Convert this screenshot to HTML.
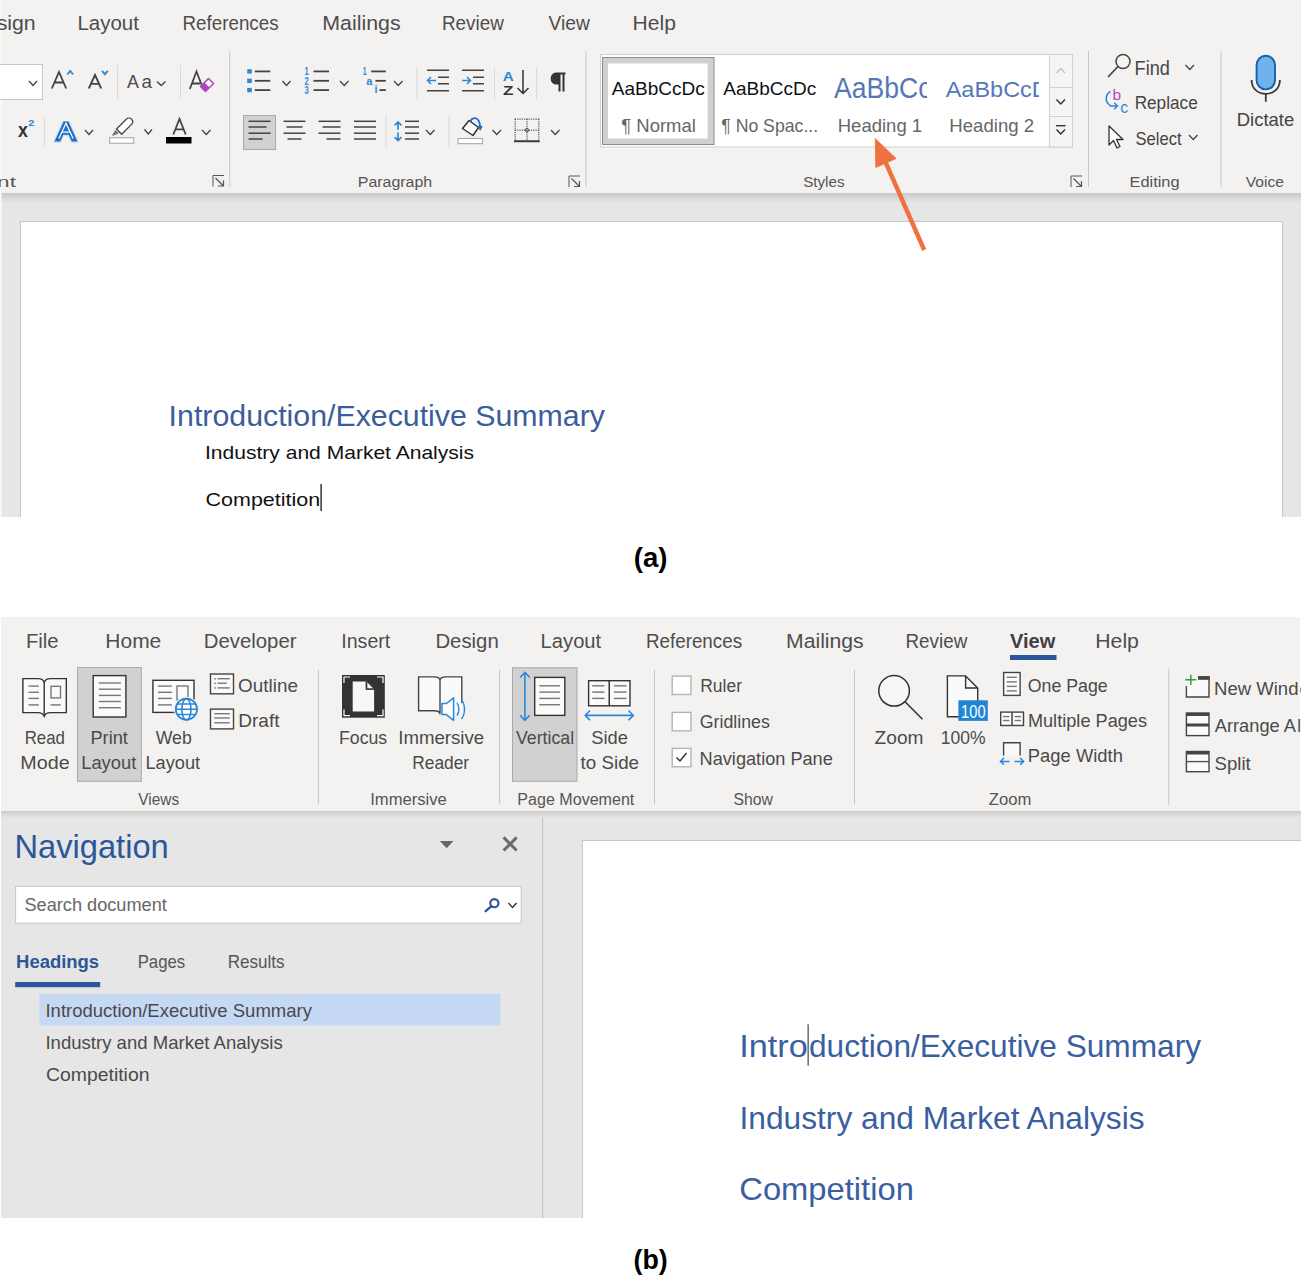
<!DOCTYPE html>
<html><head><meta charset="utf-8"><title>Word ribbon</title>
<style>html,body{margin:0;padding:0;background:#fff;overflow:hidden;} svg{display:block;} text{font-family:"Liberation Sans",sans-serif;}</style>
</head><body>
<svg width="1301" height="1279" viewBox="0 0 1301 1279" shape-rendering="geometricPrecision">
<rect width="1301" height="1279" fill="#fff"/>
<rect x="0" y="0" width="1301" height="193" fill="#f3f2f1"/>
<rect x="0" y="193" width="1301" height="324" fill="#e6e6e6"/>
<defs><linearGradient id="shA" x1="0" y1="0" x2="0" y2="1"><stop offset="0" stop-color="#c9c9c9"/><stop offset="1" stop-color="#e6e6e6"/></linearGradient></defs>
<rect x="0" y="193" width="1301" height="10" fill="url(#shA)"/>
<rect x="0" y="0" width="1.5" height="517" fill="#fafafa"/>
<rect x="20.5" y="221.5" width="1262" height="300" fill="#fff" stroke="#c6c6c6" stroke-width="1"/>
<text x="-3.33" y="30.00" font-size="19.83" font-family="Liberation Sans" font-weight="normal" fill="#4d4d4d" textLength="39.03" lengthAdjust="spacingAndGlyphs" >sign</text>
<text x="77.40" y="30.00" font-size="19.83" font-family="Liberation Sans" font-weight="normal" fill="#4d4d4d" textLength="61.53" lengthAdjust="spacingAndGlyphs" >Layout</text>
<text x="182.53" y="30.00" font-size="19.83" font-family="Liberation Sans" font-weight="normal" fill="#4d4d4d" textLength="96.05" lengthAdjust="spacingAndGlyphs" >References</text>
<text x="322.33" y="30.00" font-size="19.83" font-family="Liberation Sans" font-weight="normal" fill="#4d4d4d" textLength="78.34" lengthAdjust="spacingAndGlyphs" >Mailings</text>
<text x="442.03" y="30.00" font-size="19.83" font-family="Liberation Sans" font-weight="normal" fill="#4d4d4d" textLength="61.74" lengthAdjust="spacingAndGlyphs" >Review</text>
<text x="548.50" y="30.00" font-size="19.83" font-family="Liberation Sans" font-weight="normal" fill="#4d4d4d" textLength="41.27" lengthAdjust="spacingAndGlyphs" >View</text>
<text x="632.56" y="30.00" font-size="19.83" font-family="Liberation Sans" font-weight="normal" fill="#4d4d4d" textLength="43.30" lengthAdjust="spacingAndGlyphs" >Help</text>
<rect x="-1" y="64.5" width="43.5" height="35" fill="#fff" stroke="#c8c6c4" stroke-width="1"/>
<path d="M29,81 L33.0,85.5 L37,81" fill="none" stroke="#444" stroke-width="1.3"/>
<path d="M51.8,88.5 L59,72 L66.2,88.5 M54.5,82.5 L63.5,82.5" fill="none" stroke="#444" stroke-width="1.8"/>
<path d="M67.3,74.5 L70.2,71 L73.1,74.5" fill="none" stroke="#2b88d8" stroke-width="1.9"/>
<path d="M88.8,88.5 L95,75 L101.2,88.5 M91,83.8 L99,83.8" fill="none" stroke="#444" stroke-width="1.8"/>
<path d="M102,70.8 L104.9,74.2 L107.8,70.8" fill="none" stroke="#2b88d8" stroke-width="1.9"/>
<rect x="117.0" y="65" width="1" height="34" fill="#dcdad8"/>
<text x="127.00" y="88.00" font-size="18.16" font-family="Liberation Sans" font-weight="normal" fill="#4a4a4a" textLength="11.91" lengthAdjust="spacingAndGlyphs" >A</text>
<text x="141.41" y="88.00" font-size="17.92" font-family="Liberation Sans" font-weight="normal" fill="#4a4a4a" textLength="10.47" lengthAdjust="spacingAndGlyphs" >a</text>
<path d="M157,81.5 L161.25,85.5 L165.5,81.5" fill="none" stroke="#444" stroke-width="1.3"/>
<rect x="180.0" y="65" width="1" height="34" fill="#dcdad8"/>
<path d="M189.8,89 L196.5,71.5 L203.2,89 M192,83.5 L200,83.5" fill="none" stroke="#444" stroke-width="1.8"/>
<path d="M200.5,86.5 L208.5,78.5 L213.5,83.5 L205.5,91.5 Z" fill="#fff" stroke="#b146c2" stroke-width="1.6" stroke-linejoin="round"/><path d="M200.5,86.5 L204.5,82.5 L209.5,87.5 L205.5,91.5 Z" fill="#b146c2"/>
<text x="18.00" y="137.00" font-size="20.23" font-family="Liberation Sans" font-weight="bold" fill="#333" textLength="9.89" lengthAdjust="spacingAndGlyphs" >x</text>
<text x="28.16" y="126.00" font-size="9.78" font-family="Liberation Sans" font-weight="bold" fill="#2b88d8" textLength="6.12" lengthAdjust="spacingAndGlyphs" >2</text>
<rect x="44.2" y="117" width="1" height="30" fill="#dcdad8"/>
<clipPath id="teA"><rect x="40" y="110" width="50" height="33"/></clipPath>
<path d="M56.5,143.4 L66,122.6 L75.5,143.4 M61.3,132.2 L70.7,132.2" fill="none" stroke="#b9dcf8" stroke-width="7.6" stroke-linejoin="bevel" opacity="0.75" clip-path="url(#teA)"/>
<clipPath id="teB"><rect x="40" y="110" width="50" height="31.4"/></clipPath>
<path d="M56.5,143.4 L66,122.6 L75.5,143.4 M61.3,132.2 L70.7,132.2" fill="none" stroke="#1f6fc0" stroke-width="5.2" stroke-linejoin="bevel" clip-path="url(#teB)"/>
<path d="M58.9,138.6 L66,123.2 L73.1,138.6 M61.8,132.2 L70.2,132.2" fill="none" stroke="#fff" stroke-width="1.2" stroke-linejoin="miter"/>
<path d="M85,130 L89.0,134.5 L93,130" fill="none" stroke="#444" stroke-width="1.3"/>
<rect x="109.6" y="137.7" width="24.2" height="5.6" fill="#fff" stroke="#aaa" stroke-width="1.1"/>
<path d="M111.8,135.6 L115.5,130 L118.8,133.3 L114,135.6 Z" fill="#777"/>
<path d="M116.5,129 L126.3,119.2 C127.8,117.7 130,117.7 131.5,119.2 C133,120.7 133,122.9 131.5,124.4 L121.7,134.2 Z" fill="#fff" stroke="#444" stroke-width="1.3" stroke-linejoin="round"/>
<path d="M144.5,129.5 L148.25,134 L152,129.5" fill="none" stroke="#444" stroke-width="1.3"/>
<path d="M173.3,134.5 L179.5,119 L185.7,134.5 M175.5,129.3 L183.5,129.3" fill="none" stroke="#444" stroke-width="1.8"/>
<rect x="166" y="137" width="25.5" height="6.5" fill="#000"/>
<path d="M202,130 L206.25,134.5 L210.5,130" fill="none" stroke="#444" stroke-width="1.3"/>
<text x="-2.91" y="186.50" font-size="14.66" font-family="Liberation Sans" font-weight="normal" fill="#555" textLength="18.83" lengthAdjust="spacingAndGlyphs" >nt</text>
<path d="M213.0,186.5 L213.0,175.5 L224.0,175.5" fill="none" stroke="#555" stroke-width="1"/><path d="M215.5,178 L223.5,186 M218.0,186 L223.5,186 L223.5,180.5" fill="none" stroke="#555" stroke-width="1.2"/>
<rect x="229.2" y="51" width="1" height="136" fill="#c8c6c4"/>
<rect x="247.2" y="69.2" width="4.6" height="4.4" fill="#2b88d8"/><rect x="254.8" y="70.5" width="15.5" height="1.8" fill="#444"/><rect x="247.2" y="78.6" width="4.6" height="4.4" fill="#2b88d8"/><rect x="254.8" y="79.89999999999999" width="15.5" height="1.8" fill="#444"/><rect x="247.2" y="87.89999999999999" width="4.6" height="4.4" fill="#2b88d8"/><rect x="254.8" y="89.19999999999999" width="15.5" height="1.8" fill="#444"/>
<path d="M282.5,81 L286.5,85.5 L290.5,81" fill="none" stroke="#444" stroke-width="1.3"/>
<text x="304.6" y="75.30000000000001" font-family="Liberation Sans" font-weight="bold" font-size="10.5" fill="#2b88d8" textLength="4.2" lengthAdjust="spacingAndGlyphs">1</text><rect x="313.5" y="70.5" width="15.5" height="1.8" fill="#444"/><text x="304.6" y="84.7" font-family="Liberation Sans" font-weight="bold" font-size="10.5" fill="#2b88d8" textLength="4.2" lengthAdjust="spacingAndGlyphs">2</text><rect x="313.5" y="79.89999999999999" width="15.5" height="1.8" fill="#444"/><text x="304.6" y="94.0" font-family="Liberation Sans" font-weight="bold" font-size="10.5" fill="#2b88d8" textLength="4.2" lengthAdjust="spacingAndGlyphs">3</text><rect x="313.5" y="89.19999999999999" width="15.5" height="1.8" fill="#444"/>
<path d="M340,81 L344.25,85.5 L348.5,81" fill="none" stroke="#444" stroke-width="1.3"/>
<text x="362.8" y="75.3" font-family="Liberation Sans" font-weight="bold" font-size="10" fill="#2b88d8" textLength="3.8" lengthAdjust="spacingAndGlyphs">1</text><text x="366.3" y="85" font-family="Liberation Sans" font-weight="bold" font-size="11" fill="#2b88d8" textLength="6.2" lengthAdjust="spacingAndGlyphs">a</text><text x="374.4" y="93.3" font-family="Liberation Sans" font-weight="bold" font-size="10" fill="#2b88d8" textLength="3" lengthAdjust="spacingAndGlyphs">i</text><rect x="371.2" y="70.5" width="14.6" height="1.8" fill="#444"/><rect x="375.4" y="79.9" width="10.4" height="1.8" fill="#444"/><rect x="379.5" y="89.2" width="6.3" height="1.8" fill="#444"/>
<path d="M394,81 L398.25,85.5 L402.5,81" fill="none" stroke="#444" stroke-width="1.3"/>
<rect x="416.4" y="67" width="1" height="33" fill="#dcdad8"/>
<rect x="427" y="69.5" width="22" height="1.5" fill="#444"/><rect x="427" y="90" width="22" height="1.5" fill="#444"/><rect x="438" y="76.5" width="11" height="1.5" fill="#444"/><rect x="438" y="83" width="11" height="1.5" fill="#444"/><path d="M436,80.5 L427.5,80.5 M431,77 L427.5,80.5 L431,84" fill="none" stroke="#2b88d8" stroke-width="1.5"/>
<rect x="462" y="69.5" width="22" height="1.5" fill="#444"/><rect x="462" y="90" width="22" height="1.5" fill="#444"/><rect x="473" y="76.5" width="11" height="1.5" fill="#444"/><rect x="473" y="83" width="11" height="1.5" fill="#444"/><path d="M462,80.5 L470.5,80.5 M467,77 L470.5,80.5 L467,84" fill="none" stroke="#2b88d8" stroke-width="1.5"/>
<rect x="494.0" y="67" width="1" height="33" fill="#dcdad8"/>
<text x="502.8" y="80.5" font-family="Liberation Sans" font-weight="bold" font-size="13.5" fill="#2b88d8" textLength="11" lengthAdjust="spacingAndGlyphs">A</text>
<text x="503" y="94.5" font-family="Liberation Sans" font-weight="bold" font-size="13" fill="#333" textLength="10.5" lengthAdjust="spacingAndGlyphs">Z</text>
<path d="M523,70 L523,93.5 M517.5,88 L523,93.5 L528.5,88" fill="none" stroke="#333" stroke-width="1.5"/>
<rect x="536.1" y="67" width="1" height="33" fill="#dcdad8"/>
<path d="M559.5,73 L559.5,91.5 M563.5,73 L563.5,91.5 M565.5,73.5 L556,73.5 C550.5,73.5 550,83.5 556,83.5 L559.5,83.5" fill="none" stroke="#333" stroke-width="2"/>
<path d="M556,73.5 C551,73.5 551,83.5 556,83.5 L559.5,83.5 L559.5,73.5 Z" fill="#333"/>
<rect x="243.5" y="115.5" width="32" height="34" fill="#d1d1d1" stroke="#a9a9a9" stroke-width="1"/>
<rect x="248.5" y="120.55" width="22" height="1.5" fill="#444"/><rect x="248.5" y="126.25" width="18" height="1.5" fill="#444"/><rect x="248.5" y="132.45" width="22" height="1.5" fill="#444"/><rect x="248.5" y="138.25" width="14" height="1.5" fill="#444"/>
<rect x="283.5" y="120.55" width="22" height="1.5" fill="#444"/><rect x="286.5" y="126.25" width="16" height="1.5" fill="#444"/><rect x="283.5" y="132.45" width="22" height="1.5" fill="#444"/><rect x="287.5" y="138.25" width="14" height="1.5" fill="#444"/>
<rect x="318.5" y="120.55" width="22" height="1.5" fill="#444"/><rect x="322.5" y="126.25" width="18" height="1.5" fill="#444"/><rect x="318.5" y="132.45" width="22" height="1.5" fill="#444"/><rect x="326.5" y="138.25" width="14" height="1.5" fill="#444"/>
<rect x="354" y="120.55" width="22" height="1.5" fill="#444"/><rect x="354" y="126.25" width="22" height="1.5" fill="#444"/><rect x="354" y="132.45" width="22" height="1.5" fill="#444"/><rect x="354" y="138.25" width="22" height="1.5" fill="#444"/>
<rect x="385.4" y="115" width="1" height="33" fill="#dcdad8"/>
<path d="M398,122 L398,129.8 M398,132.5 L398,140.5 M394.6,125.3 L398,121.9 L401.4,125.3 M394.6,137.2 L398,140.6 L401.4,137.2" fill="none" stroke="#2b88d8" stroke-width="1.7"/>
<rect x="405" y="120.55" width="14" height="1.5" fill="#444"/><rect x="405" y="126.25" width="14" height="1.5" fill="#444"/><rect x="405" y="132.45" width="14" height="1.5" fill="#444"/><rect x="405" y="138.25" width="14" height="1.5" fill="#444"/>
<path d="M426,130 L430.25,134.5 L434.5,130" fill="none" stroke="#444" stroke-width="1.3"/>
<rect x="448.5" y="115" width="1" height="33" fill="#dcdad8"/>
<rect x="458" y="138.5" width="24.5" height="5.2" fill="#fff" stroke="#aaa" stroke-width="1.1"/>
<path d="M462.5,128.5 L469,120.5 L478.5,127.5 L473,135.5 Z" fill="#fafafa" stroke="#333" stroke-width="1.5" stroke-linejoin="round"/>
<path d="M470.5,121.8 C471,118 475.5,117 477.8,119.5 C479.5,121.3 480,124 480,127" fill="none" stroke="#1d6fc9" stroke-width="1.8"/><path d="M477.2,126 L480.2,131 L482.8,126 Z" fill="#1d6fc9"/>
<path d="M492.5,130 L496.75,134.5 L501,130" fill="none" stroke="#444" stroke-width="1.3"/>
<g fill="#555"><rect x="514.80" y="118.5" width="1.2" height="1.2"/><rect x="514.80" y="129.6" width="1.2" height="1.2"/><rect x="514.6" y="118.80" width="1.2" height="1.2"/><rect x="526.4" y="118.80" width="1.2" height="1.2"/><rect x="538.2" y="118.80" width="1.2" height="1.2"/><rect x="517.10" y="118.5" width="1.2" height="1.2"/><rect x="517.10" y="129.6" width="1.2" height="1.2"/><rect x="514.6" y="121.00" width="1.2" height="1.2"/><rect x="526.4" y="121.00" width="1.2" height="1.2"/><rect x="538.2" y="121.00" width="1.2" height="1.2"/><rect x="519.40" y="118.5" width="1.2" height="1.2"/><rect x="519.40" y="129.6" width="1.2" height="1.2"/><rect x="514.6" y="123.20" width="1.2" height="1.2"/><rect x="526.4" y="123.20" width="1.2" height="1.2"/><rect x="538.2" y="123.20" width="1.2" height="1.2"/><rect x="521.70" y="118.5" width="1.2" height="1.2"/><rect x="521.70" y="129.6" width="1.2" height="1.2"/><rect x="514.6" y="125.40" width="1.2" height="1.2"/><rect x="526.4" y="125.40" width="1.2" height="1.2"/><rect x="538.2" y="125.40" width="1.2" height="1.2"/><rect x="524.00" y="118.5" width="1.2" height="1.2"/><rect x="524.00" y="129.6" width="1.2" height="1.2"/><rect x="514.6" y="127.60" width="1.2" height="1.2"/><rect x="526.4" y="127.60" width="1.2" height="1.2"/><rect x="538.2" y="127.60" width="1.2" height="1.2"/><rect x="526.30" y="118.5" width="1.2" height="1.2"/><rect x="526.30" y="129.6" width="1.2" height="1.2"/><rect x="514.6" y="129.80" width="1.2" height="1.2"/><rect x="526.4" y="129.80" width="1.2" height="1.2"/><rect x="538.2" y="129.80" width="1.2" height="1.2"/><rect x="528.60" y="118.5" width="1.2" height="1.2"/><rect x="528.60" y="129.6" width="1.2" height="1.2"/><rect x="514.6" y="132.00" width="1.2" height="1.2"/><rect x="526.4" y="132.00" width="1.2" height="1.2"/><rect x="538.2" y="132.00" width="1.2" height="1.2"/><rect x="530.90" y="118.5" width="1.2" height="1.2"/><rect x="530.90" y="129.6" width="1.2" height="1.2"/><rect x="514.6" y="134.20" width="1.2" height="1.2"/><rect x="526.4" y="134.20" width="1.2" height="1.2"/><rect x="538.2" y="134.20" width="1.2" height="1.2"/><rect x="533.20" y="118.5" width="1.2" height="1.2"/><rect x="533.20" y="129.6" width="1.2" height="1.2"/><rect x="514.6" y="136.40" width="1.2" height="1.2"/><rect x="526.4" y="136.40" width="1.2" height="1.2"/><rect x="538.2" y="136.40" width="1.2" height="1.2"/><rect x="535.50" y="118.5" width="1.2" height="1.2"/><rect x="535.50" y="129.6" width="1.2" height="1.2"/><rect x="514.6" y="138.60" width="1.2" height="1.2"/><rect x="526.4" y="138.60" width="1.2" height="1.2"/><rect x="538.2" y="138.60" width="1.2" height="1.2"/><rect x="537.80" y="118.5" width="1.2" height="1.2"/><rect x="537.80" y="129.6" width="1.2" height="1.2"/><rect x="514.6" y="140.80" width="1.2" height="1.2"/><rect x="526.4" y="140.80" width="1.2" height="1.2"/><rect x="538.2" y="140.80" width="1.2" height="1.2"/></g><circle cx="527" cy="130.2" r="1.8" fill="none" stroke="#555" stroke-width="1"/><rect x="514" y="140.3" width="25.6" height="1.9" fill="#333"/>
<path d="M551,130 L555.25,134.5 L559.5,130" fill="none" stroke="#444" stroke-width="1.3"/>
<text x="357.75" y="186.70" font-size="15.36" font-family="Liberation Sans" font-weight="normal" fill="#555" textLength="74.44" lengthAdjust="spacingAndGlyphs" >Paragraph</text>
<path d="M569.0,187.0 L569.0,176.0 L580.0,176.0" fill="none" stroke="#555" stroke-width="1"/><path d="M571.5,178.5 L579.5,186.5 M574.0,186.5 L579.5,186.5 L579.5,181.0" fill="none" stroke="#555" stroke-width="1.2"/>
<rect x="585.5" y="51" width="1" height="136" fill="#c8c6c4"/>
<rect x="600.5" y="54.5" width="472" height="92.5" fill="#fff" stroke="#d2d0ce" stroke-width="1"/>
<rect x="602.5" y="57.5" width="111.5" height="87" fill="#d0d0d0" stroke="#8c8c8c" stroke-width="1"/>
<rect x="608" y="63.5" width="99.6" height="75" fill="#fff"/>
<text x="611.70" y="94.80" font-size="18.72" font-family="Liberation Sans" font-weight="normal" fill="#111" textLength="93.10" lengthAdjust="spacingAndGlyphs" >AaBbCcDc</text>
<text x="621.22" y="132.10" font-size="18.02" font-family="Liberation Sans" font-weight="normal" fill="#666" textLength="74.70" lengthAdjust="spacingAndGlyphs" >¶ Normal</text>
<text x="723.30" y="94.80" font-size="18.72" font-family="Liberation Sans" font-weight="normal" fill="#111" textLength="93.00" lengthAdjust="spacingAndGlyphs" >AaBbCcDc</text>
<text x="721.25" y="132.10" font-size="18.02" font-family="Liberation Sans" font-weight="normal" fill="#666" textLength="96.85" lengthAdjust="spacingAndGlyphs" >¶ No Spac...</text>
<clipPath id="c1"><rect x="826" y="60" width="101" height="40"/></clipPath>
<text x="834.10" y="98.10" font-size="28.91" font-family="Liberation Sans" font-weight="normal" fill="#5577b6" textLength="97.31" lengthAdjust="spacingAndGlyphs" clip-path="url(#c1)">AaBbCc</text>
<clipPath id="c2"><rect x="940" y="60" width="99" height="40"/></clipPath>
<text x="945.70" y="97.10" font-size="21.79" font-family="Liberation Sans" font-weight="normal" fill="#5577b6" textLength="103.11" lengthAdjust="spacingAndGlyphs" clip-path="url(#c2)">AaBbCcD</text>
<text x="837.75" y="132.20" font-size="18.02" font-family="Liberation Sans" font-weight="normal" fill="#666" textLength="84.40" lengthAdjust="spacingAndGlyphs" >Heading 1</text>
<text x="949.35" y="132.20" font-size="18.02" font-family="Liberation Sans" font-weight="normal" fill="#666" textLength="84.81" lengthAdjust="spacingAndGlyphs" >Heading 2</text>
<rect x="1049.5" y="54.5" width="23" height="92.5" fill="#f5f5f5" stroke="#d2d0ce" stroke-width="1"/>
<rect x="1049.5" y="87.5" width="23" height="29" fill="#f5f5f5" stroke="#d2d0ce" stroke-width="1"/>
<path d="M1056.5,73 L1060.75,68.5 L1065,73" fill="none" stroke="#c0c0c0" stroke-width="1.3"/>
<path d="M1056.5,99.5 L1060.75,104 L1065,99.5" fill="none" stroke="#333" stroke-width="1.5"/>
<rect x="1056" y="125" width="9.5" height="1.4" fill="#333"/><path d="M1056.5,129.5 L1060.75,134 L1065,129.5" fill="none" stroke="#333" stroke-width="1.5"/>
<text x="803.13" y="186.70" font-size="15.36" font-family="Liberation Sans" font-weight="normal" fill="#555" textLength="41.35" lengthAdjust="spacingAndGlyphs" >Styles</text>
<path d="M1071.0,187.0 L1071.0,176.0 L1082.0,176.0" fill="none" stroke="#555" stroke-width="1"/><path d="M1073.5,178.5 L1081.5,186.5 M1076.0,186.5 L1081.5,186.5 L1081.5,181.0" fill="none" stroke="#555" stroke-width="1.2"/>
<rect x="1088.0" y="51" width="1" height="136" fill="#c8c6c4"/>
<circle cx="1123" cy="61.5" r="7" fill="none" stroke="#444" stroke-width="1.5"/><path d="M1118,66.5 L1108,77" stroke="#444" stroke-width="1.8"/>
<text x="1134.59" y="74.60" font-size="19.55" font-family="Liberation Sans" font-weight="normal" fill="#444" textLength="35.23" lengthAdjust="spacingAndGlyphs" >Find</text>
<path d="M1185.5,65 L1189.75,69.5 L1194,65" fill="none" stroke="#444" stroke-width="1.3"/>
<text x="1112.53" y="100.00" font-size="13.97" font-family="Liberation Sans" font-weight="normal" fill="#b146c2" textLength="8.59" lengthAdjust="spacingAndGlyphs" >b</text>
<text x="1120.21" y="112.80" font-size="16.98" font-family="Liberation Sans" font-weight="normal" fill="#2b88d8" textLength="7.83" lengthAdjust="spacingAndGlyphs" >c</text>
<path d="M1110.5,91.5 C1105.5,94 1105,101 1108.5,104 L1110.5,106 L1117.5,106 M1114.2,102.7 L1117.5,106 L1114.2,109.3" fill="none" stroke="#2b88d8" stroke-width="1.5"/>
<text x="1134.66" y="109.40" font-size="18.02" font-family="Liberation Sans" font-weight="normal" fill="#444" textLength="63.04" lengthAdjust="spacingAndGlyphs" >Replace</text>
<path d="M1109,126 L1109,145 L1113.5,140.5 L1117,148 L1120,146.5 L1116.5,139.5 L1123,139.5 Z" fill="#fff" stroke="#333" stroke-width="1.3" stroke-linejoin="round"/>
<text x="1135.48" y="144.70" font-size="18.16" font-family="Liberation Sans" font-weight="normal" fill="#444" textLength="46.06" lengthAdjust="spacingAndGlyphs" >Select</text>
<path d="M1189,135 L1193.25,139.5 L1197.5,135" fill="none" stroke="#444" stroke-width="1.3"/>
<text x="1129.52" y="186.70" font-size="15.36" font-family="Liberation Sans" font-weight="normal" fill="#555" textLength="50.00" lengthAdjust="spacingAndGlyphs" >Editing</text>
<rect x="1220.5" y="51" width="1" height="136" fill="#c8c6c4"/>
<rect x="1256.6" y="55.8" width="18.4" height="33.6" rx="9.2" fill="#6fb3ea" stroke="#1a5fae" stroke-width="1.9"/>
<path d="M1251.6,80 C1251.6,98.5 1279.9,98.5 1279.9,80" fill="none" stroke="#3a3a3a" stroke-width="1.8"/><path d="M1265.8,93 L1265.8,101.8" stroke="#3a3a3a" stroke-width="1.8"/>
<text x="1236.76" y="126.00" font-size="18.16" font-family="Liberation Sans" font-weight="normal" fill="#444" textLength="57.49" lengthAdjust="spacingAndGlyphs" >Dictate</text>
<text x="1245.70" y="186.70" font-size="15.36" font-family="Liberation Sans" font-weight="normal" fill="#555" textLength="38.23" lengthAdjust="spacingAndGlyphs" >Voice</text>
<text x="168.63" y="425.80" font-size="29.05" font-family="Liberation Sans" font-weight="normal" fill="#3a5d9c" textLength="436.37" lengthAdjust="spacingAndGlyphs" >Introduction/Executive Summary</text>
<text x="204.96" y="459.00" font-size="18.16" font-family="Liberation Sans" font-weight="normal" fill="#111" textLength="269.09" lengthAdjust="spacingAndGlyphs" >Industry and Market Analysis</text>
<text x="205.59" y="505.60" font-size="18.16" font-family="Liberation Sans" font-weight="normal" fill="#111" textLength="114.61" lengthAdjust="spacingAndGlyphs" >Competition</text>
<rect x="320.5" y="484" width="1.2" height="27" fill="#000"/>
<rect x="0" y="517" width="1301" height="100" fill="#fff"/>
<text x="633.81" y="567.00" font-size="27.00" font-family="Liberation Sans" font-weight="bold" fill="#000" textLength="33.69" lengthAdjust="spacingAndGlyphs" >(a)</text>
<path d="M924.2,250 L884.6,160" stroke="#ef7140" stroke-width="4.4" stroke-linecap="butt"/>
<path d="M875.2,138.6 L875.8,167.6 L896.1,158.5 Z" fill="#ef7140" stroke="#ef7140" stroke-width="0.8" stroke-linejoin="miter"/>
<rect x="1" y="617" width="1299" height="194" fill="#f3f2f1"/>
<rect x="1" y="811" width="1300" height="407" fill="#e6e6e6"/>
<defs><linearGradient id="shB" x1="0" y1="0" x2="0" y2="1"><stop offset="0" stop-color="#cdcdcd"/><stop offset="1" stop-color="#e6e6e6"/></linearGradient></defs>
<rect x="1" y="811" width="1300" height="7" fill="url(#shB)"/>
<rect x="542" y="817" width="1.2" height="401" fill="#c8c8c8"/>
<rect x="582.5" y="840.5" width="719" height="378" fill="#fff" stroke="#c6c6c6" stroke-width="1"/>
<rect x="0" y="1218" width="1301" height="61" fill="#fff"/>
<text x="25.91" y="647.60" font-size="19.83" font-family="Liberation Sans" font-weight="normal" fill="#4d4d4d" textLength="32.71" lengthAdjust="spacingAndGlyphs" >File</text>
<text x="105.36" y="647.60" font-size="19.83" font-family="Liberation Sans" font-weight="normal" fill="#4d4d4d" textLength="55.89" lengthAdjust="spacingAndGlyphs" >Home</text>
<text x="203.81" y="647.60" font-size="19.83" font-family="Liberation Sans" font-weight="normal" fill="#4d4d4d" textLength="92.69" lengthAdjust="spacingAndGlyphs" >Developer</text>
<text x="341.27" y="647.60" font-size="19.83" font-family="Liberation Sans" font-weight="normal" fill="#4d4d4d" textLength="48.96" lengthAdjust="spacingAndGlyphs" >Insert</text>
<text x="435.41" y="647.60" font-size="19.83" font-family="Liberation Sans" font-weight="normal" fill="#4d4d4d" textLength="63.33" lengthAdjust="spacingAndGlyphs" >Design</text>
<text x="540.62" y="647.60" font-size="19.83" font-family="Liberation Sans" font-weight="normal" fill="#4d4d4d" textLength="60.61" lengthAdjust="spacingAndGlyphs" >Layout</text>
<text x="645.93" y="647.60" font-size="19.83" font-family="Liberation Sans" font-weight="normal" fill="#4d4d4d" textLength="96.16" lengthAdjust="spacingAndGlyphs" >References</text>
<text x="786.05" y="647.60" font-size="19.83" font-family="Liberation Sans" font-weight="normal" fill="#4d4d4d" textLength="77.61" lengthAdjust="spacingAndGlyphs" >Mailings</text>
<text x="905.53" y="647.60" font-size="19.83" font-family="Liberation Sans" font-weight="normal" fill="#4d4d4d" textLength="61.74" lengthAdjust="spacingAndGlyphs" >Review</text>
<text x="1010.00" y="647.50" font-size="19.83" font-family="Liberation Sans" font-weight="bold" fill="#404040" textLength="45.23" lengthAdjust="spacingAndGlyphs" >View</text>
<rect x="1010" y="655" width="46.5" height="5" fill="#2b579a"/>
<text x="1095.35" y="647.60" font-size="19.83" font-family="Liberation Sans" font-weight="normal" fill="#4d4d4d" textLength="43.51" lengthAdjust="spacingAndGlyphs" >Help</text>
<path d="M22.9,678.6 L38,678.6 C41,678.6 43.5,680 44.2,682.5 C45,680 47.5,678.6 50.5,678.6 L66.3,678.6 L66.3,712.6 L50.5,712.6 C47.5,712.6 45.2,714 44.2,716.3 C43.2,714 41,712.6 38,712.6 L22.9,712.6 Z M44.2,682.5 L44.2,714.5" fill="#fafafa" stroke="#333" stroke-width="1.4"/>
<rect x="28.5" y="685.4" width="10.3" height="1.4" fill="#777"/><rect x="28.5" y="691.5999999999999" width="10.3" height="1.4" fill="#777"/><rect x="28.5" y="697.6999999999999" width="10.3" height="1.4" fill="#777"/><rect x="28.5" y="704.1999999999999" width="10.3" height="1.4" fill="#777"/><rect x="51" y="686.3" width="9.5" height="11.6" fill="none" stroke="#777" stroke-width="1.4"/><rect x="50.4" y="704.2" width="10.4" height="1.4" fill="#777"/>
<text x="24.69" y="743.80" font-size="18.44" font-family="Liberation Sans" font-weight="normal" fill="#4a4a4a" textLength="40.16" lengthAdjust="spacingAndGlyphs" >Read</text>
<text x="20.36" y="768.50" font-size="18.44" font-family="Liberation Sans" font-weight="normal" fill="#4a4a4a" textLength="49.24" lengthAdjust="spacingAndGlyphs" >Mode</text>
<rect x="77.5" y="667.5" width="63.8" height="113.8" fill="#d1d1d1" stroke="#a9a9a9" stroke-width="1"/>
<rect x="93.2" y="675.6" width="32.7" height="41.4" fill="#fafafa" stroke="#333" stroke-width="1.4"/>
<rect x="98.8" y="682.3" width="22" height="1.4" fill="#777"/><rect x="98.8" y="688.5" width="22" height="1.4" fill="#777"/><rect x="98.8" y="694.6999999999999" width="22" height="1.4" fill="#777"/><rect x="98.8" y="700.8" width="22" height="1.4" fill="#777"/><rect x="98.8" y="707.0" width="22" height="1.4" fill="#777"/>
<text x="90.48" y="743.80" font-size="18.44" font-family="Liberation Sans" font-weight="normal" fill="#4a4a4a" textLength="37.46" lengthAdjust="spacingAndGlyphs" >Print</text>
<text x="81.16" y="768.50" font-size="18.44" font-family="Liberation Sans" font-weight="normal" fill="#4a4a4a" textLength="55.17" lengthAdjust="spacingAndGlyphs" >Layout</text>
<rect x="152.9" y="680.3" width="41.1" height="32.1" fill="#fafafa" stroke="#333" stroke-width="1.4"/>
<rect x="158" y="685.4" width="13.8" height="1.4" fill="#777"/><rect x="158" y="691.5999999999999" width="13.8" height="1.4" fill="#777"/><rect x="158" y="697.6999999999999" width="13.8" height="1.4" fill="#777"/><rect x="158" y="704.1999999999999" width="13.8" height="1.4" fill="#777"/><rect x="177" y="686" width="11" height="14" fill="none" stroke="#777" stroke-width="1.4"/>
<circle cx="186.4" cy="709.2" r="12.5" fill="#f3f2f1"/><circle cx="186.4" cy="709.2" r="10.6" fill="#fff" stroke="#2b88d8" stroke-width="1.8"/><ellipse cx="186.4" cy="709.2" rx="4.6" ry="10.6" fill="none" stroke="#2b88d8" stroke-width="1.6"/><path d="M176,709.2 L196.8,709.2 M177.5,704 L195.3,704 M177.5,714.4 L195.3,714.4" stroke="#2b88d8" stroke-width="1.5"/>
<text x="155.70" y="743.80" font-size="18.44" font-family="Liberation Sans" font-weight="normal" fill="#4a4a4a" textLength="36.02" lengthAdjust="spacingAndGlyphs" >Web</text>
<text x="145.48" y="768.50" font-size="18.44" font-family="Liberation Sans" font-weight="normal" fill="#4a4a4a" textLength="54.66" lengthAdjust="spacingAndGlyphs" >Layout</text>
<rect x="210.5" y="674" width="23" height="19.8" fill="#fafafa" stroke="#444" stroke-width="1.4"/>
<g fill="#777"><rect x="214.3" y="678" width="1.5" height="1.5"/><rect x="214.3" y="682.5" width="1.5" height="1.5"/><rect x="214.3" y="687.2" width="1.5" height="1.5"/><rect x="217.5" y="678" width="12.3" height="1.4"/><rect x="217.5" y="682.5" width="9.2" height="1.4"/><rect x="217.5" y="687.2" width="12.3" height="1.4"/></g>
<text x="238.11" y="691.90" font-size="18.16" font-family="Liberation Sans" font-weight="normal" fill="#4a4a4a" textLength="59.85" lengthAdjust="spacingAndGlyphs" >Outline</text>
<rect x="210.5" y="709.1" width="23" height="19.8" fill="#fafafa" stroke="#444" stroke-width="1.4"/>
<g fill="#777"><rect x="214.2" y="713" width="15.6" height="1.4"/><rect x="214.2" y="717.3" width="15.6" height="1.4"/><rect x="214.2" y="722.1" width="15.6" height="1.4"/></g>
<text x="238.31" y="726.90" font-size="18.16" font-family="Liberation Sans" font-weight="normal" fill="#4a4a4a" textLength="41.22" lengthAdjust="spacingAndGlyphs" >Draft</text>
<text x="138.30" y="804.70" font-size="15.78" font-family="Liberation Sans" font-weight="normal" fill="#555" textLength="40.98" lengthAdjust="spacingAndGlyphs" >Views</text>
<rect x="317.9" y="669.5" width="1" height="134.5" fill="#c8c6c4"/>
<rect x="342" y="675" width="42.8" height="42.7" fill="#333"/>
<path d="M344,683 L344,677 L350,677 M383,683 L383,677 L377,677 M344,709.5 L344,715.7 L350,715.7 M383,709.5 L383,715.7 L377,715.7" fill="none" stroke="#fff" stroke-width="1.2"/>
<path d="M352.7,681.4 L366,681.4 L374.1,689.5 L374.1,711.5 L352.7,711.5 Z" fill="#f7f7f7"/>
<path d="M366,681.4 L366,689.5 L374.1,689.5" fill="#333" stroke="#333" stroke-width="0.8"/><path d="M367.3,682.6 L373,688.3 L367.3,688.3 Z" fill="#f7f7f7"/>
<text x="339.02" y="743.80" font-size="18.44" font-family="Liberation Sans" font-weight="normal" fill="#4a4a4a" textLength="48.13" lengthAdjust="spacingAndGlyphs" >Focus</text>
<path d="M418.6,676.9 L434,676.9 Q440,676.9 440,680.5 Q440,676.9 446,676.9 L461.8,676.9 L461.8,712 L418.6,712 Z" fill="#fafafa"/>
<path d="M440,713 L440,680.5 Q440,676.9 434,676.9 L418.6,676.9 L418.6,710.8 L434,710.8 Q440,710.8 440,714.2 M440,680.5 Q440,676.9 446,676.9 L461.8,676.9 L461.8,703" fill="none" stroke="#444" stroke-width="1.4"/>
<path d="M442,703.5 L446.5,703.5 L453.6,697.8 L453.6,720.3 L446.5,714.6 L442,714.6 Z" fill="#fff" stroke="#2b88d8" stroke-width="1.5" stroke-linejoin="round"/><path d="M457,703 C459.5,706 459.5,712 457,715.5 M461.5,700 C465.5,705 465.5,714 461.5,719" fill="none" stroke="#2b88d8" stroke-width="1.4"/>
<text x="398.24" y="743.80" font-size="18.44" font-family="Liberation Sans" font-weight="normal" fill="#4a4a4a" textLength="85.91" lengthAdjust="spacingAndGlyphs" >Immersive</text>
<text x="412.25" y="768.50" font-size="18.44" font-family="Liberation Sans" font-weight="normal" fill="#4a4a4a" textLength="56.84" lengthAdjust="spacingAndGlyphs" >Reader</text>
<text x="370.20" y="804.70" font-size="15.78" font-family="Liberation Sans" font-weight="normal" fill="#555" textLength="76.67" lengthAdjust="spacingAndGlyphs" >Immersive</text>
<rect x="499.1" y="669.5" width="1" height="134.5" fill="#c8c6c4"/>
<rect x="512.5" y="667.8" width="64.5" height="113.5" fill="#d1d1d1" stroke="#a9a9a9" stroke-width="1"/>
<path d="M524.9,672.5 L524.9,720.3 M520,677.5 L524.9,672.5 L529.8,677.5 M520,715.3 L524.9,720.3 L529.8,715.3" fill="none" stroke="#2b88d8" stroke-width="1.6"/>
<rect x="534.7" y="677.4" width="30.1" height="38" fill="#fafafa" stroke="#333" stroke-width="1.4"/>
<g fill="#777"><rect x="539.4" y="685.0999999999999" width="20.5" height="1.4"/><rect x="539.4" y="691.4" width="20.5" height="1.4"/><rect x="539.4" y="697.6999999999999" width="20.5" height="1.4"/><rect x="539.4" y="704.0" width="20.5" height="1.4"/></g>
<text x="516.00" y="743.80" font-size="18.44" font-family="Liberation Sans" font-weight="normal" fill="#4a4a4a" textLength="58.17" lengthAdjust="spacingAndGlyphs" >Vertical</text>
<rect x="588.6" y="680.7" width="41.4" height="25.1" fill="#fafafa" stroke="#333" stroke-width="1.4"/><rect x="608.5" y="680.7" width="1.5" height="25.1" fill="#333"/>
<g fill="#777"><rect x="592.2" y="685.0999999999999" width="12.3" height="1.4"/><rect x="613.9" y="685.0999999999999" width="12.7" height="1.4"/><rect x="592.2" y="691.4" width="12.3" height="1.4"/><rect x="613.9" y="691.4" width="12.7" height="1.4"/><rect x="592.2" y="697.6999999999999" width="12.3" height="1.4"/><rect x="613.9" y="697.6999999999999" width="12.7" height="1.4"/></g>
<path d="M585.2,715.4 L633.3,715.4 M590,710.5 L585.2,715.4 L590,720.3 M628.5,710.5 L633.3,715.4 L628.5,720.3" fill="none" stroke="#2b88d8" stroke-width="1.6"/>
<text x="591.23" y="743.80" font-size="18.44" font-family="Liberation Sans" font-weight="normal" fill="#4a4a4a" textLength="36.61" lengthAdjust="spacingAndGlyphs" >Side</text>
<text x="580.60" y="768.50" font-size="18.44" font-family="Liberation Sans" font-weight="normal" fill="#4a4a4a" textLength="58.46" lengthAdjust="spacingAndGlyphs" >to Side</text>
<text x="517.34" y="804.70" font-size="15.78" font-family="Liberation Sans" font-weight="normal" fill="#555" textLength="117.00" lengthAdjust="spacingAndGlyphs" >Page Movement</text>
<rect x="654.0" y="669.5" width="1" height="134.5" fill="#c8c6c4"/>
<rect x="672.2" y="676.1" width="18.8" height="18.4" fill="#fff" stroke="#b4b4b4" stroke-width="1.4"/>
<rect x="672.2" y="712.4000000000001" width="18.8" height="18.4" fill="#fff" stroke="#b4b4b4" stroke-width="1.4"/>
<rect x="672.2" y="748.4000000000001" width="18.8" height="18.4" fill="#fff" stroke="#b4b4b4" stroke-width="1.4"/>
<path d="M676.5,757.5 L680,761 L686.5,753" fill="none" stroke="#333" stroke-width="1.5"/>
<text x="700.24" y="691.90" font-size="18.02" font-family="Liberation Sans" font-weight="normal" fill="#4a4a4a" textLength="41.75" lengthAdjust="spacingAndGlyphs" >Ruler</text>
<text x="699.77" y="728.40" font-size="18.02" font-family="Liberation Sans" font-weight="normal" fill="#4a4a4a" textLength="69.99" lengthAdjust="spacingAndGlyphs" >Gridlines</text>
<text x="699.58" y="764.70" font-size="18.02" font-family="Liberation Sans" font-weight="normal" fill="#4a4a4a" textLength="133.25" lengthAdjust="spacingAndGlyphs" >Navigation Pane</text>
<text x="733.51" y="804.70" font-size="15.78" font-family="Liberation Sans" font-weight="normal" fill="#555" textLength="39.30" lengthAdjust="spacingAndGlyphs" >Show</text>
<rect x="854.0" y="669.5" width="1" height="134.5" fill="#c8c6c4"/>
<circle cx="894.1" cy="690.8" r="15.3" fill="#f7f7f7" stroke="#333" stroke-width="1.5"/><path d="M905.3,702 L922.5,719.2" stroke="#333" stroke-width="1.6"/>
<text x="874.60" y="743.80" font-size="18.44" font-family="Liberation Sans" font-weight="normal" fill="#4a4a4a" textLength="48.89" lengthAdjust="spacingAndGlyphs" >Zoom</text>
<path d="M947.4,675.9 L965.6,675.9 L977.7,688 L977.7,716.8 L947.4,716.8 Z" fill="#fafafa" stroke="#333" stroke-width="1.4" stroke-linejoin="miter"/><path d="M965.6,675.9 L965.6,688 L977.7,688" fill="none" stroke="#333" stroke-width="1.4"/>
<rect x="958.4" y="700.3" width="29.4" height="20.6" fill="#1f85d6"/>
<text x="961.08" y="717.90" font-size="17.46" font-family="Liberation Sans" font-weight="normal" fill="#fff" textLength="24.48" lengthAdjust="spacingAndGlyphs" >100</text>
<text x="940.70" y="743.80" font-size="18.44" font-family="Liberation Sans" font-weight="normal" fill="#4a4a4a" textLength="44.82" lengthAdjust="spacingAndGlyphs" >100%</text>
<rect x="1003.6" y="672.5" width="16.5" height="22.9" fill="#fafafa" stroke="#444" stroke-width="1.4"/>
<g fill="#777"><rect x="1006.8" y="676.5999999999999" width="10" height="1.4"/><rect x="1006.8" y="681.1999999999999" width="10" height="1.4"/><rect x="1006.8" y="685.6999999999999" width="10" height="1.4"/><rect x="1006.8" y="690.1999999999999" width="10" height="1.4"/></g>
<text x="1027.77" y="692.20" font-size="18.85" font-family="Liberation Sans" font-weight="normal" fill="#4a4a4a" textLength="79.95" lengthAdjust="spacingAndGlyphs" >One Page</text>
<rect x="1000.7" y="712.1" width="22.8" height="13.4" fill="#fafafa" stroke="#444" stroke-width="1.4"/><rect x="1011.3" y="712.1" width="1.5" height="13.4" fill="#444"/>
<g fill="#777"><rect x="1003" y="715.9" width="6.4" height="1.4"/><rect x="1014.6" y="715.9" width="6.4" height="1.4"/><rect x="1003" y="719.8" width="6.4" height="1.4"/><rect x="1014.6" y="719.8" width="6.4" height="1.4"/></g>
<text x="1027.88" y="726.70" font-size="18.85" font-family="Liberation Sans" font-weight="normal" fill="#4a4a4a" textLength="119.19" lengthAdjust="spacingAndGlyphs" >Multiple Pages</text>
<path d="M1003.6,755.5 L1003.6,742.7 L1020.1,742.7 L1020.1,755.5" fill="#fafafa" stroke="#444" stroke-width="1.4"/>
<path d="M1000.5,761.4 L1009.5,761.4 M1004,758 L1000.5,761.4 L1004,764.8 M1014.5,761.4 L1023.7,761.4 M1020.2,758 L1023.7,761.4 L1020.2,764.8" fill="none" stroke="#2b88d8" stroke-width="1.5"/>
<text x="1027.86" y="761.70" font-size="18.85" font-family="Liberation Sans" font-weight="normal" fill="#4a4a4a" textLength="95.07" lengthAdjust="spacingAndGlyphs" >Page Width</text>
<text x="988.88" y="804.70" font-size="15.78" font-family="Liberation Sans" font-weight="normal" fill="#555" textLength="42.58" lengthAdjust="spacingAndGlyphs" >Zoom</text>
<rect x="1168.2" y="668.5" width="1" height="136.5" fill="#c8c6c4"/>
<path d="M1198,676.9 L1209,676.9 L1209,697 L1186.4,697 L1186.4,686" fill="#fafafa" stroke="#444" stroke-width="1.4"/><rect x="1198" y="676.3" width="11.6" height="3.5" fill="#444"/>
<path d="M1185.2,679.8 L1196.4,679.8 M1190.8,674.7 L1190.8,685" stroke="#2ea043" stroke-width="1.5"/>
<text x="1214.05" y="694.90" font-size="18.02" font-family="Liberation Sans" font-weight="normal" fill="#4a4a4a" textLength="84.39" lengthAdjust="spacingAndGlyphs" >New Wind</text>
<text x="1299.57" y="694.90" font-size="17.55" font-family="Liberation Sans" font-weight="normal" fill="#4a4a4a" textLength="11.25" lengthAdjust="spacingAndGlyphs" >o</text>
<rect x="1186.4" y="713" width="22.6" height="22.6" fill="#fafafa" stroke="#444" stroke-width="1.4"/><rect x="1186.4" y="713" width="22.6" height="3" fill="#444"/><rect x="1186.4" y="723.5" width="22.6" height="3" fill="#444"/>
<text x="1214.80" y="732.20" font-size="18.30" font-family="Liberation Sans" font-weight="normal" fill="#4a4a4a" textLength="81.11" lengthAdjust="spacingAndGlyphs" >Arrange A</text>
<text x="1297.23" y="732.20" font-size="18.85" font-family="Liberation Sans" font-weight="normal" fill="#4a4a4a" textLength="3.79" lengthAdjust="spacingAndGlyphs" >l</text>
<rect x="1186.4" y="751.5" width="22.6" height="20.2" fill="#fafafa" stroke="#444" stroke-width="1.4"/><rect x="1186.4" y="751.5" width="22.6" height="3" fill="#444"/><rect x="1186.4" y="760.9" width="22.6" height="1.4" fill="#555"/>
<text x="1214.62" y="769.50" font-size="18.30" font-family="Liberation Sans" font-weight="normal" fill="#4a4a4a" textLength="36.12" lengthAdjust="spacingAndGlyphs" >Split</text>
<text x="14.45" y="858.00" font-size="33.52" font-family="Liberation Sans" font-weight="normal" fill="#2b579a" textLength="154.28" lengthAdjust="spacingAndGlyphs" >Navigation</text>
<path d="M439.9,841 L453.4,841 L446.65,848.2 Z" fill="#666"/>
<path d="M503.6,837.4 L516.7,850.5 M516.7,837.4 L503.6,850.5" stroke="#6a6a6a" stroke-width="3"/>
<rect x="15.6" y="886.5" width="505.6" height="36.6" fill="#fff" stroke="#c6c6c6" stroke-width="1"/>
<text x="24.43" y="910.50" font-size="17.46" font-family="Liberation Sans" font-weight="normal" fill="#666" textLength="142.41" lengthAdjust="spacingAndGlyphs" >Search document</text>
<circle cx="494.4" cy="903.2" r="4.1" fill="none" stroke="#2b579a" stroke-width="2.1"/><path d="M491.3,906.3 L485.6,911.2" stroke="#2b579a" stroke-width="2.3" stroke-linecap="round"/>
<path d="M508.5,903 L512.5,907.5 L516.5,903" fill="none" stroke="#333" stroke-width="1.4"/>
<text x="16.05" y="967.90" font-size="18.44" font-family="Liberation Sans" font-weight="bold" fill="#2b579a" textLength="83.10" lengthAdjust="spacingAndGlyphs" >Headings</text>
<rect x="15.2" y="982" width="85" height="5.2" fill="#2b579a"/>
<text x="137.69" y="967.90" font-size="18.44" font-family="Liberation Sans" font-weight="normal" fill="#555" textLength="47.53" lengthAdjust="spacingAndGlyphs" >Pages</text>
<text x="227.67" y="967.90" font-size="18.44" font-family="Liberation Sans" font-weight="normal" fill="#555" textLength="56.97" lengthAdjust="spacingAndGlyphs" >Results</text>
<rect x="39.3" y="994" width="461.2" height="31.5" fill="#c5d9f5"/>
<text x="45.45" y="1016.60" font-size="19.27" font-family="Liberation Sans" font-weight="normal" fill="#4a4a4a" textLength="266.55" lengthAdjust="spacingAndGlyphs" >Introduction/Executive Summary</text>
<text x="45.46" y="1048.80" font-size="19.27" font-family="Liberation Sans" font-weight="normal" fill="#4a4a4a" textLength="237.22" lengthAdjust="spacingAndGlyphs" >Industry and Market Analysis</text>
<text x="45.99" y="1080.60" font-size="19.27" font-family="Liberation Sans" font-weight="normal" fill="#4a4a4a" textLength="103.50" lengthAdjust="spacingAndGlyphs" >Competition</text>
<text x="739.33" y="1056.90" font-size="30.45" font-family="Liberation Sans" font-weight="normal" fill="#3a5e9f" textLength="68.46" lengthAdjust="spacingAndGlyphs" >Intro</text>
<text x="809.01" y="1056.90" font-size="30.45" font-family="Liberation Sans" font-weight="normal" fill="#3a5e9f" textLength="391.99" lengthAdjust="spacingAndGlyphs" >duction/Executive Summary</text>
<text x="739.54" y="1128.80" font-size="30.45" font-family="Liberation Sans" font-weight="normal" fill="#3a5e9f" textLength="405.05" lengthAdjust="spacingAndGlyphs" >Industry and Market Analysis</text>
<text x="739.27" y="1199.90" font-size="30.45" font-family="Liberation Sans" font-weight="normal" fill="#3a5e9f" textLength="174.57" lengthAdjust="spacingAndGlyphs" >Competition</text>
<rect x="807.5" y="1024.3" width="1.3" height="41.5" fill="#555"/>
<text x="633.54" y="1268.60" font-size="27.00" font-family="Liberation Sans" font-weight="bold" fill="#000" textLength="34.22" lengthAdjust="spacingAndGlyphs" >(b)</text>
</svg>
</body></html>
